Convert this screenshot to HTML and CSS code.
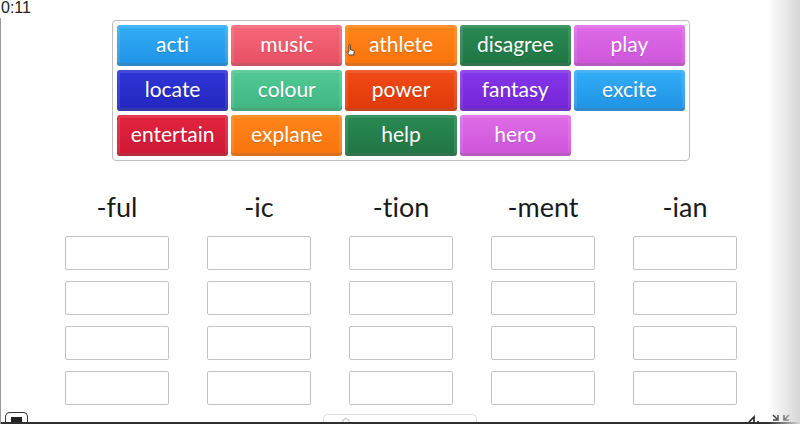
FILE: index.html
```html
<!DOCTYPE html>
<html lang="en">
<head>
    <meta charset="UTF-8">
    <title>suffix sort</title>
    <link rel="stylesheet" href="styles.css">
</head>
<body>
    <div class="timer">0:11</div>

    <div class="game">
        <!-- 단어 카드 묶음 -->
        <div class="deck">
            <div class="tile blue">acti</div>
            <div class="tile pink">music</div>
            <div class="tile orange">athlete
                <svg class="cursor" width="9" height="13" viewBox="0 0 9 13">
                    <path d="M3 1.2v6.2M3 1.2c0-.8 1.4-.8 1.4 0v4.5l3 .8c.6.2.9.7.8 1.3l-.5 3.2H3.3L1 8.4c-.5-.6.2-1.3.8-.9L3 8.6" fill="#fff" stroke="#333" stroke-width=".9" stroke-linejoin="round"/>
                </svg>
            </div>
            <div class="tile green">disagree</div>
            <div class="tile violet">play</div>

            <div class="tile navy">locate</div>
            <div class="tile mint">colour</div>
            <div class="tile red">power</div>
            <div class="tile purple">fantasy</div>
            <div class="tile blue">excite</div>

            <div class="tile crimson">entertain</div>
            <div class="tile orange">explane</div>
            <div class="tile green">help</div>
            <div class="tile violet">hero</div>
        </div>

        <!-- 접미사 칸 -->
        <div class="groups">
            <div class="group">
                <h2>-ful</h2>
                <div class="slot"></div><div class="slot"></div><div class="slot"></div><div class="slot"></div>
            </div>
            <div class="group">
                <h2>-ic</h2>
                <div class="slot"></div><div class="slot"></div><div class="slot"></div><div class="slot"></div>
            </div>
            <div class="group">
                <h2>-tion</h2>
                <div class="slot"></div><div class="slot"></div><div class="slot"></div><div class="slot"></div>
            </div>
            <div class="group">
                <h2>-ment</h2>
                <div class="slot"></div><div class="slot"></div><div class="slot"></div><div class="slot"></div>
            </div>
            <div class="group">
                <h2>-ian</h2>
                <div class="slot"></div><div class="slot"></div><div class="slot"></div><div class="slot"></div>
            </div>
        </div>

        <!-- 하단 도구줄 -->
        <div class="footer">
            <div class="menu-btn"><span></span></div>
            <div class="pager"><span></span></div>
            <div class="tools">
                <svg width="14" height="8" viewBox="0 0 14 8">
                    <path d="M1 8l5-5v5M10 7v1" stroke="#222" stroke-width="1.6" fill="none"/>
                </svg>
                <svg width="18" height="8" viewBox="0 0 18 8">
                    <path d="M1 1l5 5M6 1v5H1M17 1l-5 5M12 1v5h5" stroke="#222" stroke-width="1.6" fill="none"/>
                </svg>
            </div>
        </div>
    </div>

    <div class="edge"></div>
</body>
</html>
```

FILE: styles.css
```css
body{
    margin: 0;
    width: 800px;
    height: 424px;
    overflow: hidden;
    background: #fff;
    font-family: Lato, "Noto Sans", sans-serif;
    font-variant-ligatures: none;
    position: relative;
}

/* 상단 시간 */
.timer{
    height: 18px;
    padding-left: 1px;
    font-family: "Liberation Sans", Arial, sans-serif;
    font-size: 16px;
    line-height: 16px;
    color: #222;
}

.game{
    height: 406px;
    border-left: 1px solid #9a9a9a;
    box-sizing: border-box;
    display: flex;
    flex-direction: column;
}

/* 카드 묶음 박스 */
.deck{
    margin: 2px 0 0 111px;
    width: 578px;
    height: 141px;
    box-sizing: border-box;
    padding: 4px;
    border: 1px solid #bdbdbd;
    border-radius: 4px;
    display: grid;
    grid-template-columns: repeat(5, 1fr);
    grid-template-rows: repeat(3, 41px);
    gap: 4px 3px;
}

.tile{
    position: relative;
    border-radius: 3px;
    color: #fff;
    font-size: 21px;
    text-align: center;
    line-height: 38px;
    box-shadow: inset 0 0 0 3px rgba(255,255,255,.1), inset 0 -3px 0 rgba(0,0,0,.15);
    text-shadow: 0 1px 1px rgba(0,0,0,.15);
}
.blue{ background: linear-gradient(#33aef7, #1f92e4); }
.pink{ background: linear-gradient(#f6677a, #e84f63); }
.orange{ background: linear-gradient(#ff861a, #f9730b); }
.green{ background: linear-gradient(#2a8a53, #1f7543); }
.violet{ background: linear-gradient(#e06ce8, #cc55d8); }
.navy{ background: linear-gradient(#3035d8, #2226bd); }
.mint{ background: linear-gradient(#52c996, #40b581); }
.red{ background: linear-gradient(#f04c18, #de3808); }
.purple{ background: linear-gradient(#8538ea, #7224d6); }
.crimson{ background: linear-gradient(#e2253f, #ce1733); }

/* 마우스 커서 */
.cursor{
    position: absolute;
    left: 1px;
    top: 19px;
}

/* 접미사 칸 */
.groups{
    margin: 29px 0 0 64px;
    display: flex;
    gap: 38px;
}
.group{
    width: 104px;
    display: flex;
    flex-direction: column;
    gap: 11px;
}
.group h2{
    margin: 0 0 1px;
    height: 34px;
    font-size: 27px;
    font-weight: normal;
    line-height: 34px;
    text-align: center;
    color: #1a1a1a;
}
.slot{
    height: 34px;
    border: 1px solid #c4c4c4;
    border-radius: 2px;
    box-sizing: border-box;
}

/* 하단 도구줄 */
.footer{
    margin-top: auto;
    height: 12px;
    border-bottom: 2px solid #2e2e2e;
    display: flex;
    align-items: flex-end;
    overflow: hidden;
}
.menu-btn{
    margin-left: 4px;
    width: 23px;
    height: 10px;
    border: 1px solid #333;
    border-bottom: none;
    border-radius: 5px 5px 0 0;
    box-sizing: border-box;
    display: flex;
    justify-content: center;
    align-items: flex-end;
}
.menu-btn span{
    width: 11px;
    height: 5px;
    background: #222;
}
.pager{
    margin-left: 295px;
    width: 154px;
    height: 8px;
    border: 1px solid #ddd;
    border-bottom: none;
    border-radius: 5px 5px 0 0;
    box-sizing: border-box;
}
.pager span{
    display: block;
    margin: 3px 0 0 18px;
    width: 6px;
    height: 6px;
    border: 1px solid #bbb;
    border-radius: 50%;
}
.tools{
    margin-left: auto;
    margin-right: 10px;
    display: flex;
    gap: 10px;
    align-items: flex-end;
}

/* 오른쪽 그림자 */
.edge{
    position: absolute;
    top: 0;
    right: 0;
    width: 32px;
    height: 100%;
    background: linear-gradient(to right, rgba(255,255,255,0), #d6d6d6);
    pointer-events: none;
}
```
